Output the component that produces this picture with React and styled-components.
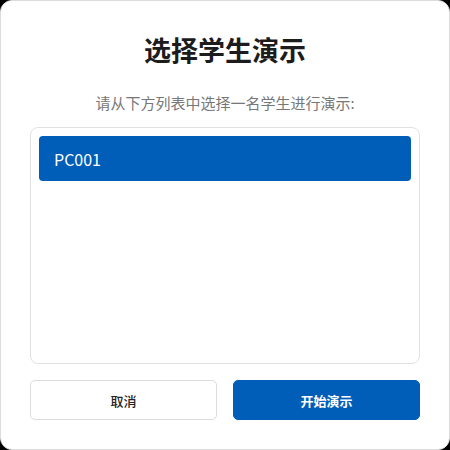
import React, { useState } from "react";
import styled, { createGlobalStyle } from "styled-components";

const Global = createGlobalStyle`
  html, body { margin: 0; padding: 0; background: #000; }
  body { font-family: "Noto Sans CJK SC", "Noto Sans", sans-serif; }
  * { box-sizing: border-box; }
`;

const Modal = styled.div`
  width: 450px;
  height: 450px;
  background: #fff;
  border: 1px solid #dcdcdc;
  border-radius: 12px;
  padding: 32px 29px 29px;
  display: flex;
  flex-direction: column;
`;

const Title = styled.h2`
  margin: 0;
  font-size: 27px;
  line-height: 34px;
  font-weight: 700;
  color: #1c1c1c;
  text-align: center;
`;

const Subtitle = styled.p`
  margin: 25px 0 0;
  font-size: 15px;
  line-height: 22px;
  color: #777;
  text-align: center;
`;

const List = styled.div`
  margin-top: 13px;
  height: 237px;
  border: 1px solid #e2e2e2;
  border-radius: 8px;
  padding: 8px;
  display: flex;
  flex-direction: column;
  gap: 6px;
`;

const Item = styled.div`
  height: 45px;
  border-radius: 4px;
  padding: 0 15px;
  display: flex;
  align-items: center;
  font-size: 16px;
  font-weight: 400;
  cursor: pointer;
  background: ${(p) => (p.$selected ? "#005eb8" : "transparent")};
  color: ${(p) => (p.$selected ? "#fff" : "#222")};
`;

const Actions = styled.div`
  margin-top: 16px;
  display: grid;
  grid-template-columns: 1fr 1fr;
  gap: 16px;
`;

const Button = styled.button`
  height: 40px;
  border-radius: 5px;
  font-family: inherit;
  font-size: 13px;
  font-weight: ${(p) => (p.$primary ? 700 : 500)};
  cursor: pointer;
  border: 1px solid ${(p) => (p.$primary ? "#005eb8" : "#dcdcdc")};
  background: ${(p) => (p.$primary ? "#005eb8" : "#fff")};
  color: ${(p) => (p.$primary ? "#fff" : "#222")};
`;

export default function App() {
  const [selected, setSelected] = useState("PC001");
  const students = ["PC001"];
  return (
    <>
      <Global />
      <Modal>
        <Title>选择学生演示</Title>
        <Subtitle>请从下方列表中选择一名学生进行演示:</Subtitle>
        <List>
          {students.map((s) => (
            <Item key={s} $selected={s === selected} onClick={() => setSelected(s)}>
              {s}
            </Item>
          ))}
        </List>
        <Actions>
          <Button>取消</Button>
          <Button $primary>开始演示</Button>
        </Actions>
      </Modal>
    </>
  );
}
